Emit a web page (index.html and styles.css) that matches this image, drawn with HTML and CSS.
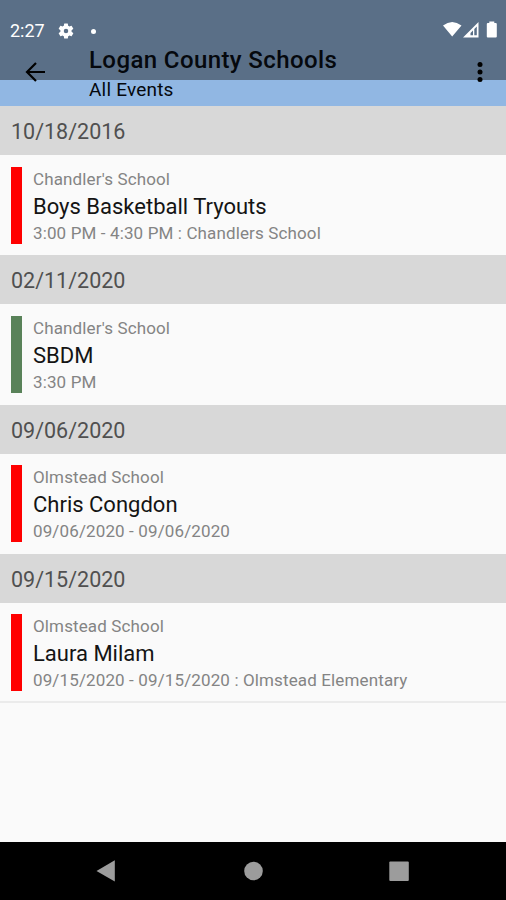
FILE: index.html
```html
<!DOCTYPE html>
<html lang="en">
<head>
<meta charset="utf-8">
<title>Logan County Schools</title>
<link rel="stylesheet" href="styles.css">
</head>
<body>
<div class="screen">
  <header class="top">
    <div class="status">
      <span class="clock">2:27</span>
      <svg class="gear" width="18" height="18" viewBox="0 0 24 24"><path fill="#fff" fill-rule="evenodd" d="M19.4 13a7.500 7.500 0 0 0 0-2l2.100-1.650a.5.5 0 0 0 .12-.64l-2-3.460a.5.5 0 0 0-.61-.22l-2.490 1a7.300 7.300 0 0 0-1.690-.98l-.38-2.650A.5.5 0 0 0 14 2h-4a.5.5 0 0 0-.49.42l-.38 2.650c-.61.25-1.170.58-1.690.98l-2.490-1a.5.5 0 0 0-.61.22l-2 3.460a.5.5 0 0 0 .12.64L4.570 11a7.900 7.900 0 0 0 0 2l-2.110 1.650a.5.5 0 0 0-.12.640l2 3.460c.12.22.39.3.61.22l2.490-1c.52.4 1.080.73 1.690.98l.38 2.650c.03.24.24.42.49.42h4c.25 0 .46-.18.49-.42l.38-2.650c.61-.25 1.170-.59 1.690-.98l2.490 1c.23.090.49 0 .61-.22l2-3.460a.5.5 0 0 0-.12-.64zM12 15a3 3 0 1 1 0-6 3 3 0 0 1 0 6z"/></svg>
      <span class="dot"></span>
      <svg class="signals" width="55" height="20" viewBox="0 0 55 20"><path fill="#fff" d="M0 4.500Q9.200-2.500 18.500 4.500L9.200 15.500ZM20 16.500L35.500 1V16.500ZM43.800 3Q43.800 2 44.800 2H46.300V.500H51.300V2H52.800Q53.800 2 53.800 3V15.500Q53.800 16.500 52.800 16.500H44.800Q43.800 16.500 43.800 15.500Z"/><path fill="#5a6f87" d="M33.800 5.500V14.300H31.300V8ZM30 9.500V14.300H27.500V12Z"/></svg>
    </div>
    <div class="bar">
      <svg class="back" width="22" height="22" viewBox="0 0 22 22"><path d="M20 11H2.500M11 2L2 11L11 20" fill="none" stroke="#000" stroke-width="2.200"/></svg>
      <div class="titles">
        <h1>Logan County Schools</h1>
        <p>All Events</p>
      </div>
      <svg class="more" width="6" height="22" viewBox="0 0 6 22"><g fill="#000"><circle cx="3" cy="3.500" r="2.500"/><circle cx="3" cy="11" r="2.500"/><circle cx="3" cy="18.500" r="2.500"/></g></svg>
    </div>
  </header>
  <main>
    <section>
      <h2>10/18/2016</h2>
      <article><i class="stripe"></i><div class="info"><p class="meta">Chandler's School</p><h3>Boys Basketball Tryouts</h3><p class="meta">3:00 PM - 4:30 PM : Chandlers School</p></div></article>
    </section>
    <section>
      <h2>02/11/2020</h2>
      <article><i class="stripe green"></i><div class="info"><p class="meta">Chandler's School</p><h3>SBDM</h3><p class="meta">3:30 PM</p></div></article>
    </section>
    <section>
      <h2>09/06/2020</h2>
      <article><i class="stripe"></i><div class="info"><p class="meta">Olmstead School</p><h3>Chris Congdon</h3><p class="meta">09/06/2020 - 09/06/2020</p></div></article>
    </section>
    <section>
      <h2>09/15/2020</h2>
      <article class="last"><i class="stripe"></i><div class="info"><p class="meta">Olmstead School</p><h3>Laura Milam</h3><p class="meta">09/15/2020 - 09/15/2020 : Olmstead Elementary</p></div></article>
    </section>
  </main>
  <nav>
    <svg width="506" height="58" viewBox="0 0 506 58"><g fill="#9c9c9c"><path d="M96.500 29L114.800 18.300V39.500Z"/><circle cx="253.500" cy="29" r="9.300"/><rect x="389.300" y="19.500" width="19.500" height="19.500" rx="1"/></g></svg>
  </nav>
</div>
</body>
</html>
```
FILE: styles.css
```css
* { box-sizing: border-box; margin: 0; }
body { background: #fafafa; font-family: Roboto, sans-serif; font-weight: 400; }
p, h1, h2, h3 { white-space: nowrap; font-weight: 400; }
svg { display: block; flex: none; }
.screen { width: 506px; height: 900px; display: flex; flex-direction: column; overflow: hidden; }
.top { height: 106px; flex: none; background: linear-gradient(#5a6f87 80px, #91b7e3 80.5px); }
.status { height: 46px; padding: 16px 8px 0 10px; display: flex; align-items: center; color: #fff; }
.clock { width: 47px; font-size: 18px; line-height: 22px; }
.dot { width: 5px; height: 5px; margin-left: 16px; border-radius: 50%; background: #fff; }
.signals { margin-left: auto; }
.bar { height: 60px; display: flex; align-items: flex-start; padding: 0 23px 0 25px; color: #05080d; }
.back { margin-top: 15px; }
.titles { flex: 1; margin-left: 42px; }
h1 { font-size: 24px; font-weight: 500; line-height: 28px; letter-spacing: 0.4px; }
.titles p { font-size: 19px; line-height: 22px; margin-top: 5px; letter-spacing: 0.2px; }
.more { margin-top: 15px; }
main { flex: 1; padding-top: 0.3px; }
section { height: 149.2px; display: flex; flex-direction: column; }
h2 { height: 49px; flex: none; padding-left: 11px; background: #d8d8d8; color: #505050; font-size: 21.5px; line-height: 52.4px; }
article { flex: 1; display: flex; padding: 11.500px 0 0 11px; }
.last { border-bottom: 2px solid #ebebeb; height: 101px; }
.stripe { width: 11px; height: 77px; flex: none; background: #ff0000; }
.green { background: #598259; }
.info { margin-left: 11px; }
.meta { font-size: 17px; line-height: 24px; color: #848484; letter-spacing: 0.13px; }
h3 { font-size: 22px; line-height: 32px; margin-bottom: -2px; color: #141414; }
nav { height: 58px; flex: none; background: #000; }
```
